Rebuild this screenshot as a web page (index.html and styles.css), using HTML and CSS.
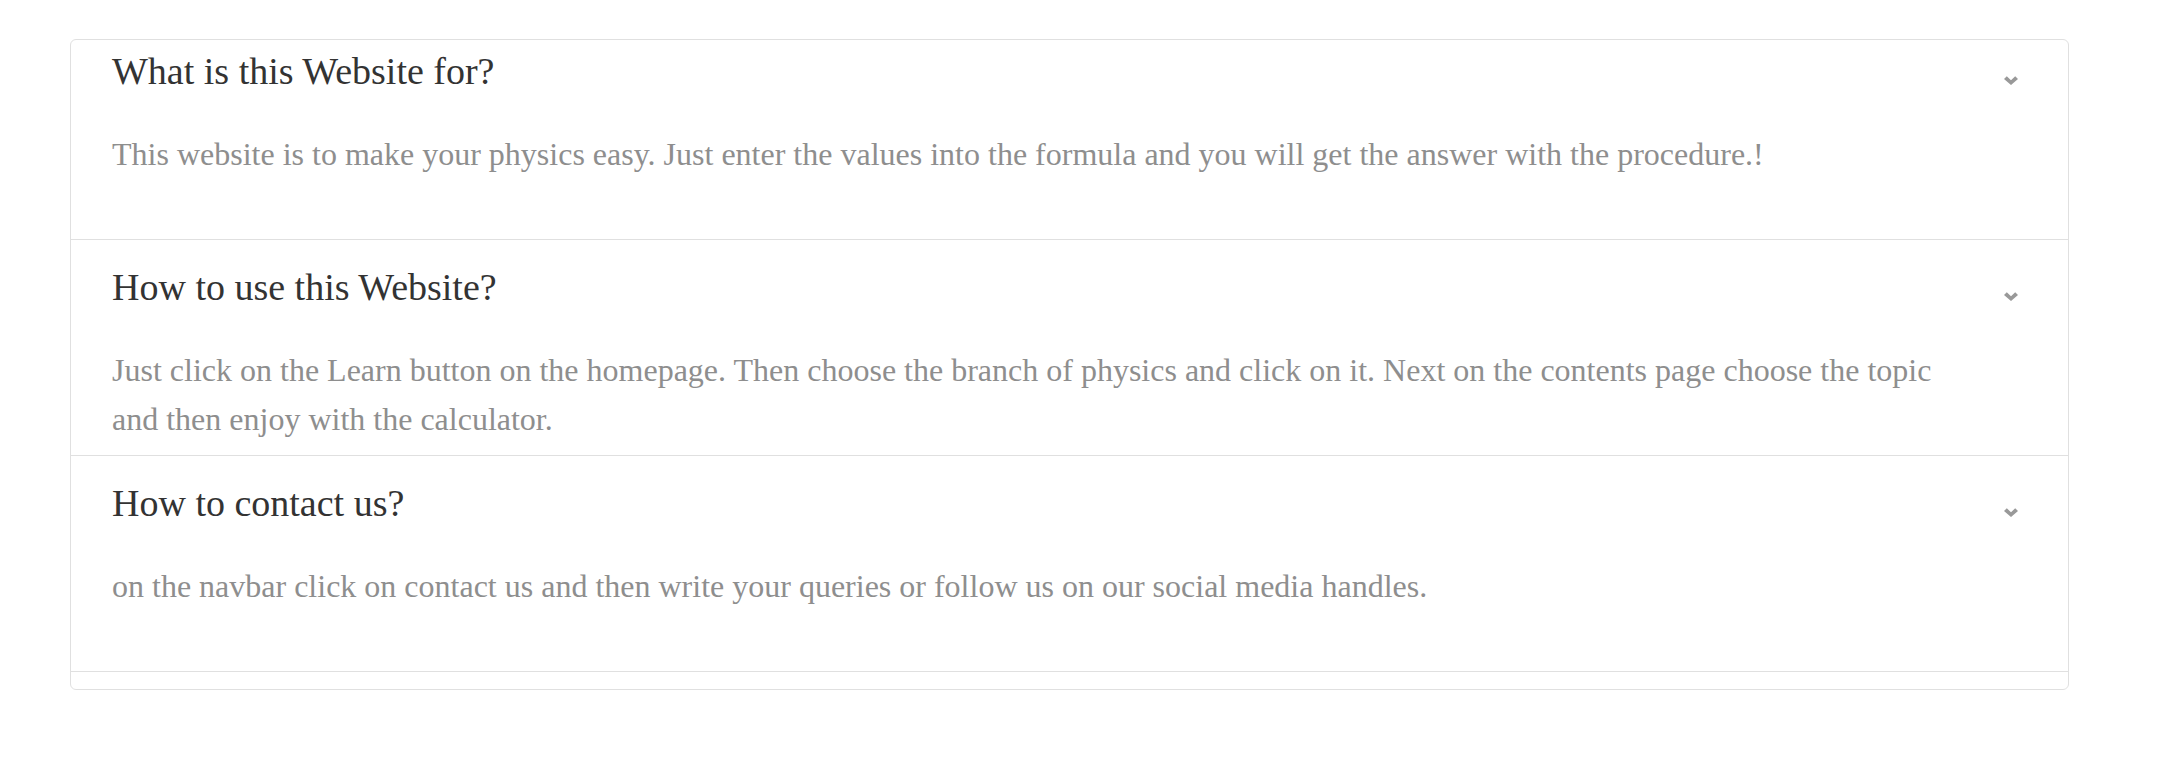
FILE: index.html
```html
<!DOCTYPE html>
<html lang="en">
<head>
<meta charset="utf-8">
<title>FAQ</title>
<link rel="stylesheet" href="styles.css">
</head>
<body>
<div class="faq">
  <div class="faq-item faq-item--first">
    <div class="faq-head">
      <h4 class="faq-title">What is this Website for?</h4>
      <svg class="chev" width="14" height="9" viewBox="0 0 14 9"><path d="M0 3 L2.8 0.2 L7 4.2 L11.2 0.2 L14 3 L7 9 Z" fill="#999999"/></svg>
    </div>
    <p class="faq-body">This website is to make your physics easy. Just enter the values into the formula and you will get the answer with the procedure.!</p>
  </div>
  <div class="faq-item">
    <div class="faq-head">
      <h4 class="faq-title">How to use this Website?</h4>
      <svg class="chev" width="14" height="9" viewBox="0 0 14 9"><path d="M0 3 L2.8 0.2 L7 4.2 L11.2 0.2 L14 3 L7 9 Z" fill="#999999"/></svg>
    </div>
    <p class="faq-body">Just click on the Learn button on the homepage. Then choose the branch of physics and click on it. Next on the contents page choose the topic and then enjoy with the calculator.</p>
  </div>
  <div class="faq-item">
    <div class="faq-head">
      <h4 class="faq-title">How to contact us?</h4>
      <svg class="chev" width="14" height="9" viewBox="0 0 14 9"><path d="M0 3 L2.8 0.2 L7 4.2 L11.2 0.2 L14 3 L7 9 Z" fill="#999999"/></svg>
    </div>
    <p class="faq-body">on the navbar click on contact us and then write your queries or follow us on our social media handles.</p>
  </div>
</div>
</body>
</html>
```
FILE: styles.css
```css
html, body {
  background: #ffffff;
}
body {
  margin: 0;
  font-family: "Liberation Serif", "Times New Roman", serif;
}
.faq {
  box-sizing: border-box;
  width: 1999px;
  margin: 39px 0 0 70px;
  border: 1px solid #e0e0e0;
  border-radius: 6px;
  padding-bottom: 17px;
  overflow: hidden;
}
.faq-item {
  box-sizing: border-box;
  height: 216px;
  border-bottom: 1px solid #e0e0e0;
  padding-top: 24.5px;
}
.faq-item--first {
  margin-top: -16px;
}
.faq-head {
  display: flex;
  align-items: flex-start;
  justify-content: space-between;
  padding: 0 50px 0 41px;
}
.faq-title {
  margin: 0;
  font-size: 38px;
  line-height: 45.6px;
  font-weight: normal;
  color: #333333;
}
.chev {
  display: block;
  margin-top: 27px;
}
.faq-body {
  margin: 36px 0 0 0;
  padding: 0 110px 0 41px;
  font-size: 32px;
  line-height: 49px;
  color: #8e8e8e;
}
```
